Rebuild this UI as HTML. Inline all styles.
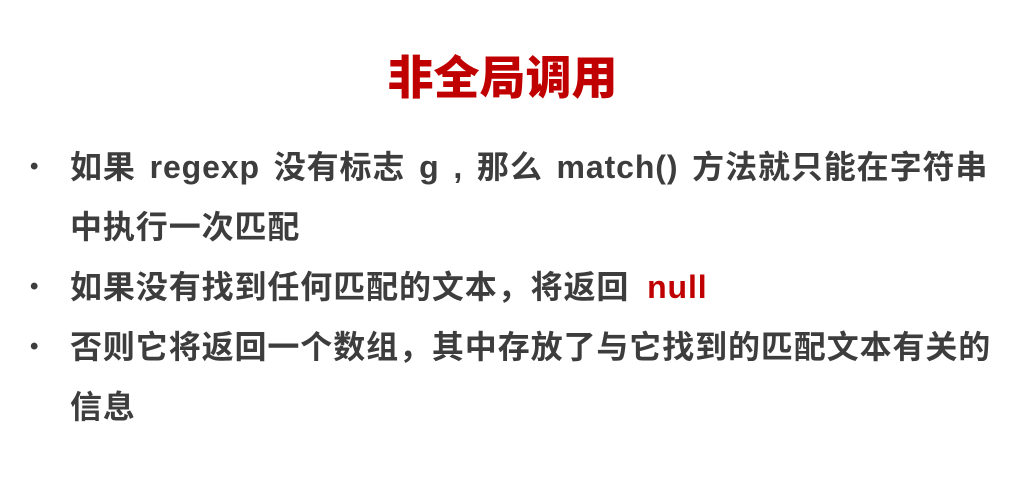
<!DOCTYPE html>
<html><head><meta charset="utf-8"><style>
html,body{margin:0;padding:0;background:#fff;width:1025px;height:482px;overflow:hidden}
body{font-family:"Liberation Sans","Noto Sans CJK SC",sans-serif;font-weight:bold;color:#3d3d3d;position:relative}
.t{position:absolute;left:0;width:1005px;text-align:center;top:45px;font-size:46px;line-height:60px;color:#c00000;font-family:"Noto Sans CJK SC",sans-serif;font-weight:900}
.l{position:absolute;left:70px;font-size:32px;line-height:60px;white-space:nowrap;letter-spacing:0.9px}
.b{position:absolute;left:30px;font-size:24px;line-height:60px}
.r{color:#c00000}
</style></head><body>
<div class="t">非全局调用</div>
<div class="b" style="top:137px">•</div>
<div class="l" style="top:137px;word-spacing:4px">如果 regexp 没有标志 g , 那么 match() 方法就只能在字符串</div>
<div class="l" style="top:197px">中执行一次匹配</div>
<div class="b" style="top:257px">•</div>
<div class="l" style="top:257px;word-spacing:8px">如果没有找到任何匹配的文本，将返回 <span class="r">null</span></div>
<div class="b" style="top:317px">•</div>
<div class="l" style="top:317px">否则它将返回一个数组，其中存放了与它找到的匹配文本有关的</div>
<div class="l" style="top:377px">信息</div>
</body></html>
